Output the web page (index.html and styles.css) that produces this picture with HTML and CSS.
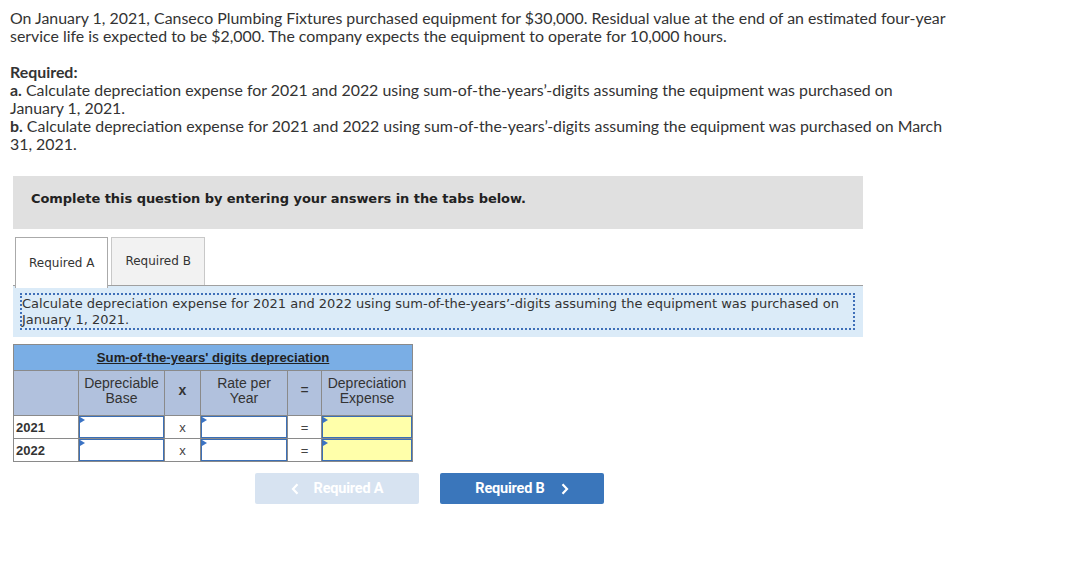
FILE: index.html
```html
<!DOCTYPE html>
<html>
<head>
<meta charset="utf-8">
<link rel="stylesheet" href="styles.css">
</head>
<body>
<div class="page">
  <div class="intro">
    <p>On January 1, 2021, Canseco Plumbing Fixtures purchased equipment for $30,000. Residual value at the end of an estimated four-year<br>service life is expected to be $2,000. The company expects the equipment to operate for 10,000 hours.</p>
    <p><strong>Required:</strong><br>
    <strong>a.</strong> Calculate depreciation expense for 2021 and 2022 using sum-of-the-years’-digits assuming the equipment was purchased on<br>January 1, 2021.<br>
    <strong>b.</strong> Calculate depreciation expense for 2021 and 2022 using sum-of-the-years’-digits assuming the equipment was purchased on March<br>31, 2021.</p>
  </div>

  <div class="widget">
    <div class="banner">Complete this question by entering your answers in the tabs below.</div>

    <div class="tabs">
      <div class="tab active">Required A</div>
      <div class="tab">Required B</div>
    </div>

    <div class="panel">
      <div class="prompt">Calculate depreciation expense for 2021 and 2022 using sum-of-the-years’-digits assuming the equipment was purchased on January 1, 2021.</div>
    </div>

    <table class="sheet">
      <colgroup>
        <col class="w-year">
        <col class="w-base">
        <col class="w-x">
        <col class="w-rate">
        <col class="w-eq">
        <col class="w-exp">
      </colgroup>
      <tr class="title-row">
        <td colspan="6"><span class="title">Sum-of-the-years' digits depreciation</span></td>
      </tr>
      <tr class="head-row">
        <td></td>
        <td>Depreciable<br>Base</td>
        <td class="bold">x</td>
        <td>Rate per<br>Year</td>
        <td>=</td>
        <td>Depreciation<br>Expense</td>
      </tr>
      <tr class="data-row">
        <td class="year">2021</td>
        <td class="cell"><div class="field"></div></td>
        <td class="op">x</td>
        <td class="cell"><div class="field"></div></td>
        <td class="op">=</td>
        <td class="cell"><div class="field yellow"></div></td>
      </tr>
      <tr class="data-row">
        <td class="year">2022</td>
        <td class="cell"><div class="field"></div></td>
        <td class="op">x</td>
        <td class="cell"><div class="field"></div></td>
        <td class="op">=</td>
        <td class="cell"><div class="field yellow"></div></td>
      </tr>
    </table>

    <div class="nav">
      <div class="btn disabled"><svg class="chev left" width="8" height="12" viewBox="0 0 8 12"><path d="M6.5 1.2 L2 6 L6.5 10.8" fill="none" stroke="#ffffff" stroke-width="2.2"/></svg>Required A</div>
      <div class="btn primary">Required B<svg class="chev right" width="8" height="12" viewBox="0 0 8 12"><path d="M1.5 1.2 L6 6 L1.5 10.8" fill="none" stroke="#ffffff" stroke-width="2.2"/></svg></div>
    </div>
  </div>
</div>
</body>
</html>
```

FILE: styles.css
```css
html, body {
  margin: 0;
  padding: 0;
  background: #ffffff;
}

.page {
  padding: 9px 10px 0 10px;
}

.intro {
  width: 1000px;
  font-family: Lato, "Liberation Sans", sans-serif;
  font-size: 15.9px;
  line-height: 18px;
  color: #333333;
}

.intro p {
  margin: 0 0 18px 0;
}

.intro p:last-child {
  margin-bottom: 0;
}

.intro strong {
  font-weight: 700;
}

.widget {
  width: 850px;
  margin-left: 3px;
  margin-top: 23px;
}

.banner {
  background: #e0e0e0;
  height: 53px;
  padding: 0 0 8px 18px;
  font-family: "DejaVu Sans", Verdana, sans-serif;
  font-weight: bold;
  font-size: 13px;
  color: #222222;
  letter-spacing: -0.05px;
  box-sizing: border-box;
  display: flex;
  align-items: center;
}

.tabs {
  display: flex;
  margin-top: 8px;
  padding-left: 2px;
  gap: 3px;
  height: 48px;
}

.tab {
  border: 1px solid #c8c8c8;
  border-bottom: none;
  background: #f2f2f2;
  font-family: "DejaVu Sans", Verdana, sans-serif;
  font-size: 12px;
  color: #333333;
  padding: 0 13px 1px 13px;
  display: flex;
  align-items: center;
  letter-spacing: 0;
}

.tab.active {
  background: #ffffff;
  border-color: #aaaaaa;
  position: relative;
  z-index: 1;
  height: 49px;
}

.panel {
  border-top: 1px solid #a0a0a0;
  background: #dbebf8;
  padding: 7px 8px 7px 7px;
}

.prompt {
  border: 2px dotted #3f6fb8;
  font-family: "DejaVu Sans", Verdana, sans-serif;
  font-size: 13px;
  line-height: 16px;
  color: #333333;
  padding: 1px 4px 0 0;
  letter-spacing: 0;
}

.sheet {
  margin-top: 7px;
  border-collapse: collapse;
  table-layout: fixed;
  width: 399px;
  font-family: "Liberation Sans", Arial, sans-serif;
  font-size: 13px;
  color: #333333;
}

.w-year { width: 65px; }
.w-base { width: 86px; }
.w-x { width: 36px; }
.w-rate { width: 87px; }
.w-eq { width: 34px; }
.w-exp { width: 91px; }

.sheet td {
  border: 1px solid #8a8a8a;
  padding: 0;
}

.title-row td {
  background: #7aaee5;
  height: 25px;
  text-align: center;
}

.title {
  font-weight: bold;
  text-decoration: underline;
  color: #222222;
  font-size: 13.2px;
}

.head-row td {
  background: #b1c1dd;
  height: 45px;
  text-align: center;
  vertical-align: middle;
  font-size: 14px;
  line-height: 15px;
  padding-bottom: 5px;
  box-sizing: border-box;
}

.bold { font-weight: bold; }

.data-row td {
  height: 22px;
  background: #ffffff;
}

.data-row .year {
  font-weight: bold;
  padding-left: 2px;
  text-align: left;
}

.data-row .op {
  text-align: center;
  color: #444444;
}

.data-row .cell {
  padding: 0;
}

.field {
  height: 20px;
  border: 1px solid #3b6fb6;
  background: #ffffff;
  position: relative;
}

.field.yellow {
  background: #ffffaa;
}

.field::before {
  content: "";
  position: absolute;
  left: 0;
  top: 0;
  border-top: 3px solid transparent;
  border-bottom: 3px solid transparent;
  border-left: 5px solid #3b73c4;
}

.nav {
  display: flex;
  gap: 21px;
  margin-top: 11px;
  padding-left: 242px;
}

.btn {
  width: 164px;
  height: 31px;
  border-radius: 2px;
  display: flex;
  align-items: center;
  justify-content: center;
  font-family: Roboto, "Liberation Sans", sans-serif;
  font-weight: bold;
  font-size: 14.5px;
  color: #ffffff;
  letter-spacing: -0.2px;
}

.btn.primary {
  background: #3a76bb;
}

.btn.disabled {
  background: #d7e3f1;
}

.chev {
  display: block;
}

.chev.left {
  margin-right: 15px;
}

.chev.right {
  margin-left: 16px;
}
```
